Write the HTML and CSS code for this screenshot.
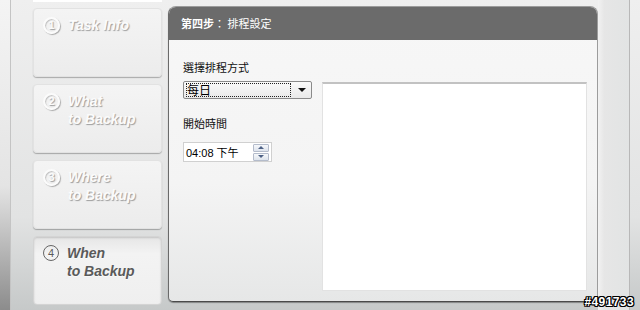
FILE: index.html
```html
<!DOCTYPE html>
<html lang="zh-Hant">
<head>
  <meta charset="UTF-8" />
  <title>排程設定</title>
  <link rel="stylesheet" href="styles.css">
</head>
<body>

  <div class="screen">
    <div class="edge"></div>

    <div class="steps">
      <div class="stub"></div>
      <div class="step">
        <span class="num">1</span>
        <span class="step-name">Task Info</span>
      </div>
      <div class="step">
        <span class="num">2</span>
        <span class="step-name">What<br>to Backup</span>
      </div>
      <div class="step">
        <span class="num">3</span>
        <span class="step-name">Where<br>to Backup</span>
      </div>
      <div class="step active">
        <span class="num">4</span>
        <span class="step-name">When<br>to Backup</span>
      </div>
    </div>

    <div class="panel">
      <div class="panel-head"><b>第四步</b>：&nbsp;排程設定</div>
      <div class="panel-body">
        <div class="form">
          <div class="label">選擇排程方式</div>
          <div class="select">
            <span class="select-value">每日</span>
            <span class="arrow"></span>
          </div>
          <div class="label">開始時間</div>
          <div class="time">
            <span class="time-value">04:08 下午</span>
            <span class="spin">
              <span class="spin-btn up"></span>
              <span class="spin-btn down"></span>
            </span>
          </div>
        </div>
        <div class="preview"></div>
      </div>
    </div>

    <div class="rail"></div>
  </div>

  <div class="tag">#491733</div>

</body>
</html>
```

FILE: styles.css
```css
body {
  margin: 0;
  width: 640px;
  height: 310px;
  overflow: hidden;
  position: relative;
  font-family: "Liberation Sans", "Noto Sans CJK TC", sans-serif;
  background: linear-gradient(#efefef, #e2e3e3 70%, #c6c9c9);
}
.screen {
  display: flex;
  height: 310px;
}
.edge {
  width: 10px;
  border-right: 1px solid #c4c4c4;
  background: linear-gradient(#f4f4f4, #e4e4e4 60%, #8c8c8c);
}
.steps {
  width: 129px;
  padding: 0 6px 0 22px;
  display: flex;
  flex-direction: column;
  gap: 7px;
}
.stub {
  height: 2px;
  margin-bottom: -1px;
  background: #fff;
}
.step {
  height: 69px;
  box-sizing: border-box;
  padding: 7px 0 0 9px;
  display: flex;
  gap: 8px;
  border-radius: 4px;
  border: 1px solid #e2e2e2;
  background: linear-gradient(#f4f4f4, #ececec);
  box-shadow: 0 1px 1px rgba(0, 0, 0, 0.28);
  color: #fbfbfb;
  text-shadow: 1px 1px 1px rgba(0, 0, 0, 0.35);
}
.num {
  width: 13px;
  height: 13px;
  margin-top: 1px;
  border: 2px solid #fbfbfb;
  border-radius: 50%;
  font-size: 11px;
  font-weight: bold;
  line-height: 13px;
  text-align: center;
  box-shadow: 1px 1px 1px rgba(0, 0, 0, 0.3), inset 1px 1px 1px rgba(0, 0, 0, 0.2);
}
.step-name {
  font-size: 14px;
  font-weight: bold;
  font-style: italic;
  line-height: 18px;
}
.step.active {
  color: #5a5a5a;
  text-shadow: 0 1px 0 rgba(255, 255, 255, 0.6);
  border-color: #d4d4d4;
  background: linear-gradient(#e6e6e6, #f3f3f3 25%, #efefef);
  box-shadow: inset 0 1px 2px rgba(0, 0, 0, 0.15);
}
.step.active .num {
  border: 1.5px solid #666;
  width: 14px;
  height: 14px;
  line-height: 14px;
  font-weight: normal;
  box-shadow: none;
}
.panel {
  width: 430px;
  height: 296px;
  margin-top: 6px;
  box-sizing: border-box;
  border: 1px solid #9c9c9c;
  border-bottom-color: #4a4a4a;
  border-left-color: #6a6a6a;
  border-radius: 8px 8px 3px 5px;
  background: linear-gradient(#f7f7f7, #f4f4f4 60%, #e6e7e7);
  box-shadow: 0 1px 1px rgba(0, 0, 0, 0.35);
  overflow: hidden;
}
.panel-head {
  height: 33px;
  padding-left: 12px;
  background: #6b6b6b;
  color: #fff;
  font-family: "Noto Sans CJK TC", sans-serif;
  font-size: 11px;
  line-height: 33px;
}
.panel-body {
  display: flex;
  gap: 10px;
  padding: 19px 10px 10px 14px;
}
.form {
  width: 129px;
  display: flex;
  flex-direction: column;
}
.label {
  font-family: "Noto Sans CJK TC", sans-serif;
  font-size: 11px;
  line-height: 16px;
  color: #111;
  margin-bottom: 6px;
}
.select {
  height: 18px;
  box-sizing: border-box;
  border: 1px solid #8a8a8a;
  border-radius: 2px;
  background: linear-gradient(#fafafa, #e9e9e9);
  display: flex;
  align-items: center;
  padding: 0 4px 0 2px;
  margin-bottom: 16px;
}
.select-value {
  width: 105px;
  height: 14px;
  box-sizing: border-box;
  border: 1px dotted #222;
  font-family: "Noto Sans CJK TC", sans-serif;
  font-size: 12px;
  line-height: 12px;
  color: #000;
}
.arrow {
  margin-left: auto;
  margin-right: 1px;
  border-left: 4px solid transparent;
  border-right: 4px solid transparent;
  border-top: 4px solid #111;
}
.time {
  width: 89px;
  height: 20px;
  margin-top: 5px;
  box-sizing: border-box;
  border: 1px solid #d0d0d0;
  background: #fff;
  display: flex;
  align-items: center;
  padding: 0 2px 0 2px;
}
.time-value {
  font-size: 11px;
  color: #000;
}
.spin {
  margin-left: auto;
  display: flex;
  flex-direction: column;
  gap: 1px;
}
.spin-btn {
  width: 14px;
  height: 6px;
  border: 1px solid #b4bccb;
  border-radius: 1px;
  background: linear-gradient(#f6f8fb, #dde3ec);
  display: flex;
  align-items: center;
  justify-content: center;
}
.spin-btn::after {
  content: "";
  border-left: 3px solid transparent;
  border-right: 3px solid transparent;
}
.up::after {
  border-bottom: 3px solid #4d6185;
}
.down::after {
  border-top: 3px solid #4d6185;
}
.preview {
  flex: 1;
  height: 209px;
  margin-top: 23px;
  box-sizing: border-box;
  border: 1px solid #e2e2e2;
  border-top: 2px solid #c2c2c2;
  background: #fff;
}
.rail {
  width: 31px;
  border-right: 1px solid #b8b8b8;
  background: linear-gradient(90deg, #f2f2f2, #e6e6e6 20%, #e2e4e4);
}
.tag {
  position: absolute;
  right: 6px;
  bottom: 1px;
  font-family: "Liberation Sans", sans-serif;
  font-size: 12px;
  font-weight: bold;
  letter-spacing: 0.4px;
  color: #fff;
  text-shadow: 1px 0 0 #000, -1px 0 0 #000, 0 1px 0 #000, 0 -1px 0 #000,
    1px 1px 0 #000, -1px -1px 0 #000, 1px -1px 0 #000, -1px 1px 0 #000;
}
```
